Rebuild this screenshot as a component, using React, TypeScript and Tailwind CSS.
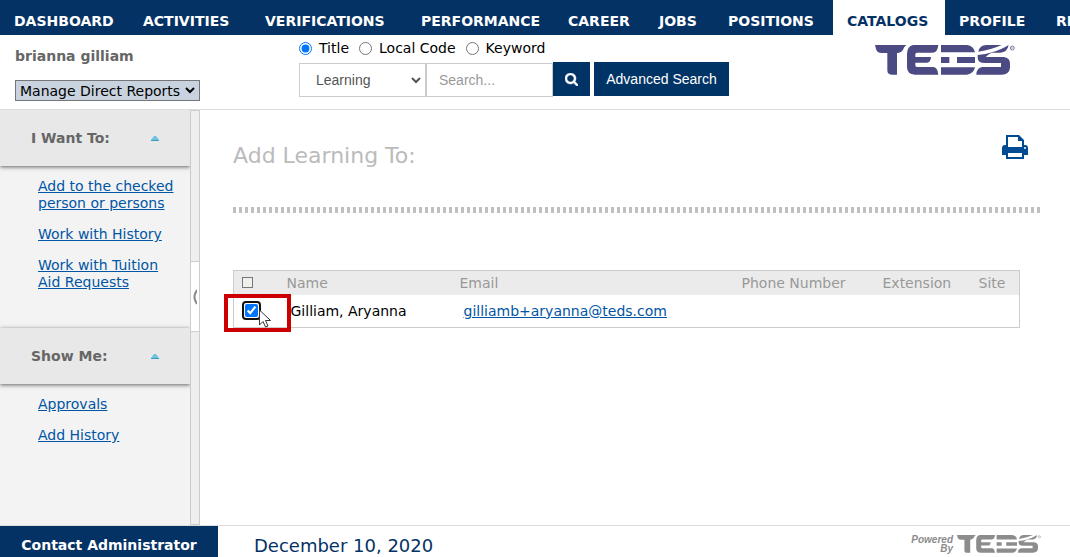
import React from "react";

const NAV = [
  { name: "DASHBOARD", width: "w-[129px]" },
  { name: "ACTIVITIES", width: "w-[122px]" },
  { name: "VERIFICATIONS", width: "w-[156px]" },
  { name: "PERFORMANCE", width: "w-[147px]" },
  { name: "CAREER", width: "w-[91px]" },
  { name: "JOBS", width: "w-[69px]" },
  { name: "POSITIONS", width: "w-[119px]" },
  { name: "CATALOGS", width: "w-[112px]" },
  { name: "PROFILE", width: "w-[97px]" },
  { name: "REPORTS", width: "w-[100px]" },
];

function TedsMark({ className }: { className: string }) {
  return (
    <svg viewBox="0 0 420 90" className={className} fill="currentColor" role="img" aria-label="TEDS">
      <path d="M0 0H94Q86 6 84 14Q80 22 66 24V89H50Q37 89 37 76V24H20Q6 24 3 12Z" />
      <path d="M114 0H190Q188 23 172 23H126Q121 23 121 28V36H168Q167 53 156 53H121V61Q121 66 126 66H174Q188 67 190 89H120Q96 88 96 66V26Q97 3 114 0Z" />
      <path d="M198 0H276Q296 2 300 22H198Z" />
      <path d="M198 36H223V54H198ZM246 36H300V54H246Z" />
      <path d="M198 67H300Q296 87 276 89H198Z" />
      <path d="M310 20Q314 0 334 0H380Q350 14 310 20Z" />
      <path d="M401 0Q397 22 376 23H346Q378 15 401 0Z" />
      <path d="M308 30Q332 28 352 22Q336 32 332 36H386Q405 38 405 56V68Q403 88 380 89H304Q305 68 322 66H378V54H330Q308 54 308 38Z" />
      <circle cx="412" cy="9" r="6" fill="none" stroke="currentColor" strokeWidth="2" />
      <path d="M410 13V6H413Q416 8 413 10L415 13" fill="none" stroke="currentColor" />
    </svg>
  );
}

function Chevron({ className }: { className: string }) {
  return (
    <svg viewBox="0 0 10 7" className={className} fill="none" stroke="currentColor" strokeWidth="2">
      <path d="M1 1L5 5L9 1" />
    </svg>
  );
}

function SideSection({ title, links, className }: { title: string; links: string[]; className: string }) {
  return (
    <section className={className}>
      <h2>
        <button
          type="button"
          className="flex h-14 w-full items-center justify-between bg-[#e8e8e8] px-[31px] text-left font-bold text-[#666] shadow-[0_1px_4px_rgba(0,0,0,0.6)]"
        >
          {title}
          <svg viewBox="0 0 8 5" className="h-[5px] w-2">
            <path d="M0 5V4L3 0H5L8 4V5Z" fill="#6fc3e2" />
            <path d="M0 4H8V5H0Z" fill="#3a9cc0" />
          </svg>
        </button>
      </h2>
      <ul className="flex flex-col gap-[14px] pt-3 pr-3 pl-[38px] leading-[17px]">
        {links.map((l) => (
          <li key={l}>
            <a href="#" className="text-[#0055a5] underline">
              {l}
            </a>
          </li>
        ))}
      </ul>
    </section>
  );
}

export default function App() {
  return (
    <div className="flex min-h-screen flex-col overflow-hidden bg-white font-['DejaVu_Sans',sans-serif] text-sm text-black">
      <nav className="flex h-[35px] overflow-hidden bg-[#053264] font-bold text-white">
        {NAV.map((n) => (
          <a
            key={n.name}
            href="#"
            className={`flex shrink-0 items-center pt-[6px] pl-[14px] ${n.width} ${
              n.name === "CATALOGS" ? "bg-white text-[#053264]" : ""
            }`}
          >
            {n.name}
          </a>
        ))}
      </nav>

      <header className="flex h-[75px] items-start border-b border-[#ddd]">
        <div className="flex w-[299px] shrink-0 flex-col items-start gap-[14px] pt-[11px] pl-[15px]">
          <div className="font-bold text-[#666]">brianna gilliam</div>
          <div className="relative">
            <select
              aria-label="View"
              className="block h-[21px] w-[185px] appearance-none border border-[#767676] bg-[#c8d3df] pl-1 text-sm"
            >
              <option>Manage Direct Reports</option>
            </select>
            <Chevron className="pointer-events-none absolute top-[7px] right-[5px] h-[7px] w-[10px]" />
          </div>
        </div>
        <form className="pt-1">
          <div className="flex h-[18px] items-center gap-[10px]">
            {["Title", "Local Code", "Keyword"].map((r) => (
              <label key={r} className="flex items-center gap-[7px]">
                <input type="radio" name="field" defaultChecked={r === "Title"} className="size-[13px] accent-[#0075ff]" />
                {r}
              </label>
            ))}
          </div>
          <div className="mt-[5px] flex items-start font-['Liberation_Sans',sans-serif]">
            <div className="relative mt-px text-[#555]">
              <select
                aria-label="Category"
                className="block h-[34px] w-[127px] appearance-none border border-[#ccc] bg-white pl-4 text-sm"
              >
                <option>Learning</option>
              </select>
              <Chevron className="pointer-events-none absolute top-[14px] right-[5px] h-[7px] w-[10px]" />
            </div>
            <input
              aria-label="Search"
              placeholder="Search..."
              className="mt-px h-[34px] w-[127px] border border-[#ccc] px-3 text-sm placeholder:text-[#999]"
            />
            <button
              type="button"
              aria-label="Search"
              className="flex h-[34px] w-[37px] items-center justify-center bg-[#003366] text-white"
            >
              <svg viewBox="0 0 1664 1664" className="size-[13px]" fill="currentColor" stroke="currentColor" strokeWidth="60">
                <path d="M1152 704q0-185-131.500-316.500T704 256 387.500 387.500 256 704t131.500 316.500T704 1152t316.500-131.500T1152 704zm512 832q0 52-38 90t-90 38q-54 0-90-38l-343-342q-179 124-399 124-143 0-273.500-55.500t-225-150-150-225T0 704t55.500-273.500 150-225 225-150T704 0t273.500 55.500 225 150 150 225T1408 704q0 220-124 399l343 343q37 37 37 90z" />
              </svg>
            </button>
            <button type="button" className="ml-1 h-[34px] w-[135px] bg-[#003366] text-sm text-white">
              Advanced Search
            </button>
          </div>
        </form>
        <TedsMark className="mt-[10px] mr-[55px] ml-auto h-[30px] w-[140px] text-[#4b4a82]" />
      </header>

      <div className="flex grow">
        <aside className="w-[190px] shrink-0 overflow-hidden bg-[#f3f3f3]">
          <SideSection
            title="I Want To:"
            links={["Add to the checked person or persons", "Work with History", "Work with Tuition Aid Requests"]}
            className="pb-[37px]"
          />
          <SideSection title="Show Me:" links={["Approvals", "Add History"]} className="pb-2" />
        </aside>
        <div className="flex w-[10px] shrink-0 flex-col border border-[#ccc] bg-[#eee] pt-[150px]">
          <button
            type="button"
            aria-label="Collapse sidebar"
            className="flex h-[71px] w-full items-center justify-center border-y border-[#ccc] bg-white"
          >
            <svg viewBox="0 0 4 16" className="h-4 w-1" fill="none" stroke="#888" strokeWidth="2">
              <path d="M4 1L2 5Q1 8 2 11L4 15" />
            </svg>
          </button>
        </div>

        <main className="min-w-0 grow pt-6 pr-[27px] pl-[33px]">
          <div className="flex items-start justify-between pr-[15px]">
            <h1 className="pt-[6px] text-[22px] leading-8 text-[#bbb]">Add Learning To:</h1>
            <button type="button" aria-label="Print">
              <svg viewBox="0 0 26 25" className="h-[25px] w-[26px]">
                <path
                  fill="#004b91"
                  fillRule="evenodd"
                  d="M4 1H17L22 6V11H23Q26 11 26 14V21H22V25H4V21H0V14Q0 11 3 11H4ZM6 3V13H20V7H16V3ZM6 19V23H20V19ZM23 13A1 1 0 1 0 23 15A1 1 0 1 0 23 13Z"
                />
              </svg>
            </button>
          </div>
          <div
            aria-hidden="true"
            className="mt-[35px] h-[6px] bg-[repeating-linear-gradient(90deg,#bfbfbf_0,#bfbfbf_3px,transparent_3px,transparent_6px)]"
          />
          <div className="relative mt-[57px] mr-[23px]">
            <table className="w-full table-fixed border-collapse border border-[#ccc] text-left">
              <colgroup>
                <col className="w-[53px]" />
                <col className="w-[173px]" />
                <col className="w-[282px]" />
                <col className="w-[141px]" />
                <col className="w-[96px]" />
                <col />
              </colgroup>
              <thead className="bg-[#ebebeb] text-[#999]">
                <tr className="h-6">
                  <th className="pl-2">
                    <input
                      type="checkbox"
                      aria-label="Select all"
                      className="block size-[11px] appearance-none border border-[#777] bg-[#f0efea]"
                    />
                  </th>
                  <th className="font-normal">Name</th>
                  <th className="font-normal">Email</th>
                  <th className="font-normal">Phone Number</th>
                  <th className="font-normal">Extension</th>
                  <th className="font-normal">Site</th>
                </tr>
              </thead>
              <tbody>
                <tr className="h-[33px]">
                  <td className="pl-2">
                    <span className="block size-[19px] rounded-[4px] border-2 border-[#101010] p-px">
                      <input
                        type="checkbox"
                        defaultChecked
                        aria-label="Select Gilliam, Aryanna"
                        className="block size-[13px] accent-[#0075ff]"
                      />
                    </span>
                  </td>
                  <td className="pl-1">Gilliam, Aryanna</td>
                  <td className="pl-1">
                    <a href="#" className="text-[#0055a5] underline">
                      gilliamb+aryanna@teds.com
                    </a>
                  </td>
                  <td />
                  <td />
                  <td />
                </tr>
              </tbody>
            </table>
            <div className="pointer-events-none absolute top-6 -left-[9px] h-[38px] w-[67px] border-4 border-[#c00]" />
            <svg viewBox="0 0 12 19" className="pointer-events-none absolute top-[39px] left-[26px] h-[19px] w-3">
              <path d="M.5 1V16L4 12.500L6.500 18L9 17L6.500 11.500H11.500Z" fill="#fff" stroke="#333" />
            </svg>
          </div>
        </main>
      </div>

      <footer className="flex h-8 items-stretch border-t border-[#ddd]">
        <a href="#" className="flex w-[218px] items-center justify-center bg-[#053264] pt-[6px] font-bold text-white">
          Contact Administrator
        </a>
        <div className="flex items-center pt-2 pl-9 text-lg text-[#053264]">December 10, 2020</div>
        <div className="ml-auto flex items-center gap-1 pt-1 pr-[29px] text-[#8c8c8c]">
          <div className="text-right font-['Liberation_Sans',sans-serif] text-[10px] leading-[9px] font-bold italic">
            Powered
            <br />
            By
          </div>
          <TedsMark className="h-[18px] w-[84px]" />
        </div>
      </footer>
    </div>
  );
}
